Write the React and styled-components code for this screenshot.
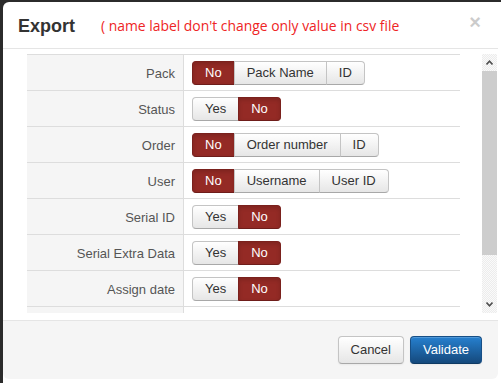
import React from 'react';
import styled, { createGlobalStyle } from 'styled-components';

const GlobalStyle = createGlobalStyle`
  html, body { margin: 0; padding: 0; background: #fff; }
  body { font-family: "Liberation Sans", Arial, Helvetica, sans-serif; }
  * { box-sizing: border-box; }
`

const Backdrop = styled.div`
  width: 501px;
  height: 383px;
  padding: 2px 0 0 3px;
  background:
    linear-gradient(#2b2b2b, #2b2b2b) left top / 3px 100% no-repeat,
    linear-gradient(#2b2b2b, #2b2b2b) left top / 100% 2px no-repeat,
    linear-gradient(#2b2b2b, #2b2b2b) left top / 12px 12px no-repeat,
    #fff;
  overflow: hidden;
`

const Modal = styled.div`
  width: 495px;
  height: 377px;
  background: #fff;
  border-radius: 6px;
  display: flex;
  flex-direction: column;
  overflow: hidden;
`

const Header = styled.div`
  height: 47px;
  flex: none;
  display: flex;
  align-items: center;
  padding: 0 15px;
  border-bottom: 1px solid #e5e5e5;
`

const Title = styled.h3`
  margin: 0;
  font-size: 18px;
  font-weight: bold;
  color: #333;
  line-height: 20px;
  padding-top: 2px;
`

const Note = styled.span`
  margin-left: 26px;
  font-family: "Open Sans", "Noto Sans", sans-serif;
  font-size: 13.9px;
  color: #ee2424;
  padding-top: 1px;
`

const Close = styled.span`
  margin-left: auto;
  margin-right: 2px;
  font-size: 20px;
  font-weight: bold;
  color: #000;
  opacity: .2;
  line-height: 20px;
  padding-bottom: 6px;
`

const Body = styled.div`
  height: 271px;
  flex: none;
  display: flex;
  align-items: flex-start;
  padding: 5px 1px 0 24px;
`

const Viewport = styled.div`
  width: 433px;
  height: 259px;
  overflow: hidden;
  border-top: 1px solid #ddd;
`

const Row = styled.div`
  display: grid;
  grid-template-columns: 157px 1fr;
  height: 36px;
  border-bottom: 1px solid #ddd;
`

const Label = styled.div`
  background: #f5f5f5;
  border-right: 1px solid #ddd;
  display: flex;
  align-items: center;
  justify-content: flex-end;
  padding-right: 8px;
  padding-top: 1px;
  font-size: 13px;
  color: #555;
`

const Cell = styled.div`
  display: flex;
  align-items: center;
  padding-left: 8px;
`

const Group = styled.div`
  display: flex;
`

const Choice = styled.button`
  font-family: inherit;
  font-size: 13px;
  line-height: 18px;
  height: 24px;
  padding: 0 12px;
  margin: 0;
  margin-left: -1px;
  cursor: pointer;
  color: ${p => (p.$active ? '#fff' : '#333')};
  background: ${p => (p.$active ? '#942a25' : 'linear-gradient(#fff, #e6e6e6)')};
  border: 1px solid ${p => (p.$active ? '#7a211d' : '#c4c4c4')};
  border-bottom-color: ${p => (p.$active ? '#6e1d1a' : '#a8a8a8')};
  box-shadow: ${p => (p.$active ? 'inset 0 2px 4px rgba(0,0,0,.15)' : 'inset 0 1px 0 rgba(255,255,255,.2)')};
  border-radius: 0;
  &:first-child { margin-left: 0; border-radius: 4px 0 0 4px; }
  &:last-child { border-radius: 0 4px 4px 0; }
`

const Scrollbar = styled.div`
  margin-left: 22px;
  width: 15px;
  height: 259px;
  display: flex;
  flex-direction: column;
  background: repeating-conic-gradient(#ececec 0 25%, #fafafa 0 50%) 0 0 / 2px 2px;
`

const Arrow = styled.div`
  height: 17px;
  flex: none;
  display: flex;
  align-items: center;
  justify-content: center;
`

const Thumb = styled.div`
  height: 184px;
  background: #cdcdcd;
`

const Track = styled.div`
  flex: 1;
`

const Footer = styled.div`
  flex: 1;
  background: #f5f5f5;
  border-top: 1px solid #e5e5e5;
  display: flex;
  justify-content: flex-end;
  align-items: flex-start;
  gap: 6px;
  padding: 15px 16px 0 0;
`

const ActionButton = styled.button`
  font-family: inherit;
  font-size: 13px;
  line-height: 18px;
  padding: 4px 12px;
  border-radius: 4px;
  cursor: pointer;
  color: ${p => (p.$primary ? '#fff' : '#333')};
  background: ${p => (p.$primary ? 'linear-gradient(#2680cf, #15497c)' : 'linear-gradient(#fff, #e6e6e6)')};
  border: 1px solid ${p => (p.$primary ? '#174f86' : '#c4c4c4')};
  border-bottom-color: ${p => (p.$primary ? '#0f3a63' : '#a8a8a8')};
  box-shadow: inset 0 1px 0 rgba(255,255,255,.2), 0 1px 2px rgba(0,0,0,.05);
`

const Chevron = ({ up }) => (
  <svg width="7" height="5" viewBox="0 0 7 5">
    <path d={up ? 'M0.5 4.5 L3.5 1.2 L6.5 4.5' : 'M0.5 0.5 L3.5 3.8 L6.5 0.5'} fill="none" stroke="#505050" strokeWidth="1.6" />
  </svg>
)

const fields = [
  { label: 'Pack', options: ['No', 'Pack Name', 'ID'], active: 0 },
  { label: 'Status', options: ['Yes', 'No'], active: 1 },
  { label: 'Order', options: ['No', 'Order number', 'ID'], active: 0 },
  { label: 'User', options: ['No', 'Username', 'User ID'], active: 0 },
  { label: 'Serial ID', options: ['Yes', 'No'], active: 1 },
  { label: 'Serial Extra Data', options: ['Yes', 'No'], active: 1 },
  { label: 'Assign date', options: ['Yes', 'No'], active: 1 },
]

const App = () => {
  return <Backdrop>
    <GlobalStyle />
    <Modal>
      <Header>
        <Title>Export</Title>
        <Note>( name label don't change only value in csv file</Note>
        <Close>×</Close>
      </Header>
      <Body>
        <Viewport>
          {fields.map(f => (
            <Row key={f.label}>
              <Label>{f.label}</Label>
              <Cell>
                <Group>
                  {f.options.map((o, i) => (
                    <Choice key={o + i} $active={i === f.active}>{o}</Choice>
                  ))}
                </Group>
              </Cell>
            </Row>
          ))}
          {/* next row, scrolled out of view */}
          <Row>
            <Label />
            <Cell />
          </Row>
        </Viewport>
        <Scrollbar>
          <Arrow><Chevron up /></Arrow>
          <Thumb />
          <Track />
          <Arrow><Chevron /></Arrow>
        </Scrollbar>
      </Body>
      <Footer>
        <ActionButton>Cancel</ActionButton>
        <ActionButton $primary>Validate</ActionButton>
      </Footer>
    </Modal>
  </Backdrop>
}

export default App;
